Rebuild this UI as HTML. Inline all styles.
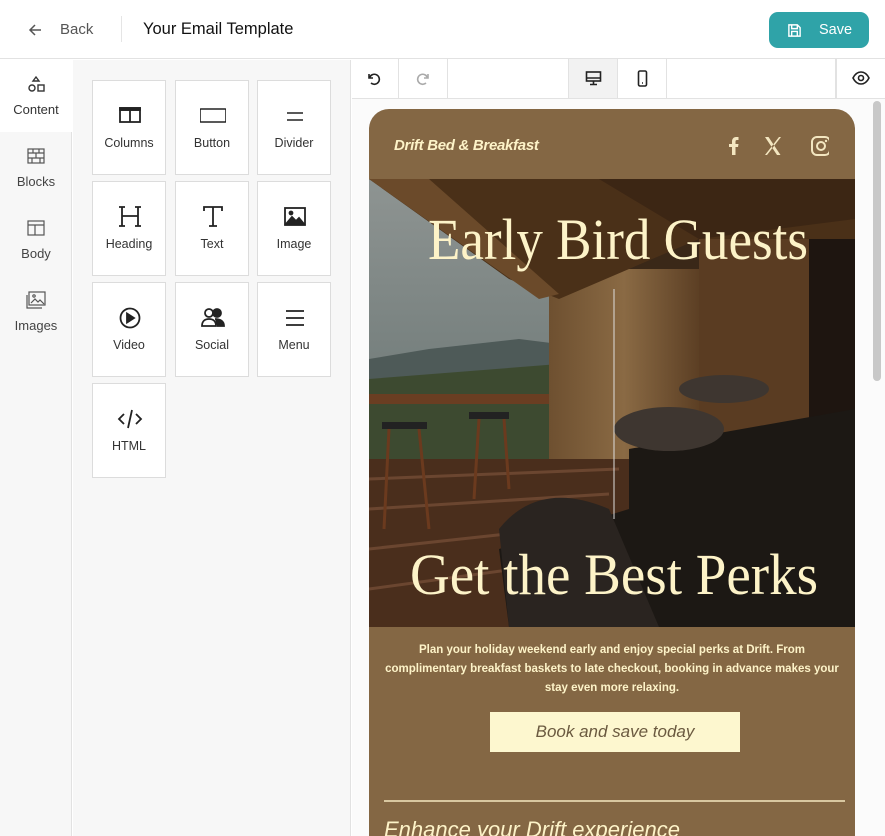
<!DOCTYPE html>
<html><head><meta charset="utf-8"><style>
*{box-sizing:border-box;margin:0;padding:0}
body{width:885px;height:836px;overflow:hidden;background:#fff;font-family:"Liberation Sans",sans-serif;position:relative;color:#222}
.top{position:absolute;left:0;top:0;width:885px;height:59px;border-bottom:1px solid #e2e2e2;background:#fff}
.rail{position:absolute;left:0;top:60px;width:72px;height:776px;background:#f7f7f7;border-right:1px solid #e2e2e2}
.ri{position:absolute;left:0;width:72px;text-align:center;font-size:13px;color:#333}
.panel{position:absolute;left:73px;top:60px;width:278px;height:776px;background:#f7f7f7;border-right:1px solid #e2e2e2}
.tile{position:absolute;width:74px;height:95px;background:#fff;border:1px solid #dcdcdc;text-align:center;font-size:12.5px;color:#333}
.tile svg{position:absolute;left:24px;top:22px}
.tile span{position:absolute;left:0;right:0;top:55px}
.tb{position:absolute;left:352px;top:59px;width:533px;height:40px;border-bottom:1px solid #e2e2e2;background:#fff}
.tb div{position:absolute;top:0;height:39px;border-right:1px solid #e2e2e2}
</style></head><body>
<div class="top">
<svg style="position:absolute;left:28px;top:23px" width="14" height="14" viewBox="0 0 14 14" fill="none" stroke="#555" stroke-width="1.5"><path d="M13 7H2M7 2L2 7l5 5"/></svg>
<div style="position:absolute;left:60px;top:21px;font-size:15px;color:#555">Back</div>
<div style="position:absolute;left:121px;top:16px;width:1px;height:26px;background:#e5e5e5"></div>
<div style="position:absolute;left:143px;top:20px;font-size:16.5px;color:#111">Your Email Template</div>
<div style="position:absolute;left:769px;top:12px;width:100px;height:36px;border-radius:9px;background:#2fa3a8;color:#fff;font-size:14.5px">
<svg style="position:absolute;left:18px;top:11px" width="15" height="15" viewBox="0 0 16 16" fill="none" stroke="#fff" stroke-width="1.5"><path d="M2 2h9l3 3v9H2z M5 2v4h6V2 M5 14v-5h6v5"/></svg>
<span style="position:absolute;left:50px;top:10px">Save</span></div>
</div>
<div class="rail">
<div style="position:absolute;left:0;top:0;width:72px;height:72px;background:#fff"></div>
<div style="position:absolute;left:72px;top:27px;width:0;height:0;border-top:8px solid transparent;border-bottom:8px solid transparent;border-left:8px solid #fff"></div>
<svg style="position:absolute;left:27px;top:15px" width="18" height="18" viewBox="0 0 18 18" fill="none" stroke="#333" stroke-width="1.4"><path d="M9 2l3 4H6z"/><circle cx="5" cy="13" r="3"/><rect x="11" y="10" width="6" height="6"/></svg>
<div class="ri" style="top:42px">Content</div>
<svg style="position:absolute;left:27px;top:88px" width="18" height="16" viewBox="0 0 18 16" fill="none" stroke="#555" stroke-width="1.2"><rect x="1" y="1" width="16" height="14"/><path d="M1 5h16M1 10h16M6 1v4M12 1v4M9 5v5M5 10v5M13 10v5"/></svg>
<div class="ri" style="top:114px;color:#444">Blocks</div>
<svg style="position:absolute;left:27px;top:160px" width="18" height="16" viewBox="0 0 18 16" fill="none" stroke="#555" stroke-width="1.2"><rect x="1" y="1" width="16" height="14"/><path d="M1 5h16M8 5v10"/></svg>
<div class="ri" style="top:186px;color:#444">Body</div>
<svg style="position:absolute;left:26px;top:231px" width="20" height="18" viewBox="0 0 20 18" fill="none" stroke="#555" stroke-width="1.2"><rect x="3" y="1" width="16" height="13"/><path d="M1 4v13h15M5 12l4-4 3 3 2-2 4 4"/><circle cx="8" cy="5" r="1.2"/></svg>
<div class="ri" style="top:258px;color:#444">Images</div>
</div>
<div class="panel">
<div class="tile" style="left:19px;top:20px"><svg width="26" height="22" viewBox="0 0 26 22" fill="none" stroke="#222" stroke-width="1.8"><rect x="3" y="5" width="20" height="14"/><path d="M3 7h20M13 7v12" /><path d="M3 5h20v2H3z" fill="#222"/></svg><span>Columns</span></div>
<div class="tile" style="left:102px;top:20px"><svg width="26" height="22" viewBox="0 0 26 22" fill="none" stroke="#222" stroke-width="1.6"><rect x="0" y="6" width="26" height="13" rx="1"/></svg><span>Button</span></div>
<div class="tile" style="left:184px;top:20px"><svg width="26" height="22" viewBox="0 0 26 22" fill="none" stroke="#222" stroke-width="1.6"><path d="M5 10h16M5 17h16"/></svg><span>Divider</span></div>
<div class="tile" style="left:19px;top:121px"><svg width="26" height="24" viewBox="0 0 26 24" fill="none" stroke="#222" stroke-width="1.8"><path d="M5 3v19M21 3v19M5 12h16M2 3h6M18 3h6M2 22h6M18 22h6"/></svg><span>Heading</span></div>
<div class="tile" style="left:102px;top:121px"><svg width="26" height="24" viewBox="0 0 26 24" fill="none" stroke="#222" stroke-width="1.8"><path d="M4 7V3h18v4M13 3v19M9 22h8"/></svg><span>Text</span></div>
<div class="tile" style="left:184px;top:121px"><svg width="26" height="24" viewBox="0 0 26 24" fill="none" stroke="#222" stroke-width="1.8"><rect x="3" y="4" width="20" height="17"/><path d="M4 20l6-7 4 4 3-3 5 6z" fill="#222"/><circle cx="9" cy="9" r="1.5" fill="#222"/></svg><span>Image</span></div>
<div class="tile" style="left:19px;top:222px"><svg width="26" height="24" viewBox="0 0 26 24" fill="none" stroke="#222" stroke-width="1.8"><circle cx="13" cy="13" r="9.5"/><path d="M10 8.5l7 4.5-7 4.5z" fill="#222"/></svg><span>Video</span></div>
<div class="tile" style="left:102px;top:222px"><svg width="26" height="24" viewBox="0 0 26 24" fill="none" stroke="#222" stroke-width="1.8"><circle cx="9" cy="8" r="4"/><path d="M2 21c0-5 3-7 7-7s7 2 7 7z"/><circle cx="17" cy="8" r="4" fill="#222"/><path d="M15 14c5 0 9 2 9 7h-7" fill="#222"/></svg><span>Social</span></div>
<div class="tile" style="left:184px;top:222px"><svg width="26" height="24" viewBox="0 0 26 24" fill="none" stroke="#222" stroke-width="1.8"><path d="M4 6h18M4 13h18M4 20h18"/></svg><span>Menu</span></div>
<div class="tile" style="left:19px;top:323px"><svg width="26" height="24" viewBox="0 0 26 24" fill="none" stroke="#222" stroke-width="1.8"><path d="M7 8l-5 5 5 5M19 8l5 5-5 5M15 4l-4 18"/></svg><span>HTML</span></div>
</div>
<div class="tb">
<div style="left:0;width:47px"><svg style="position:absolute;left:15px;top:13px" width="14" height="14" viewBox="0 0 14 14" fill="none" stroke="#222" stroke-width="1.6"><path d="M2 2v4h4"/><path d="M2.5 6A5 5 0 1 1 4 11"/></svg></div>
<div style="left:47px;width:49px"><svg style="position:absolute;left:17px;top:13px" width="14" height="14" viewBox="0 0 14 14" fill="none" stroke="#aaa" stroke-width="1.6"><path d="M12 2v4H8"/><path d="M11.5 6A5 5 0 1 0 10 11"/></svg></div>
<div style="left:96px;width:121px"></div>
<div style="left:217px;width:49px;background:#f2f2f2"><svg style="position:absolute;left:16px;top:12px" width="17" height="15" viewBox="0 0 17 15" fill="none" stroke="#222" stroke-width="1.6"><rect x="1.5" y="1" width="14" height="9"/><path d="M1.5 7h14M8.5 10v3M5 13.5h7"/></svg></div>
<div style="left:266px;width:49px"><svg style="position:absolute;left:19px;top:11px" width="11" height="17" viewBox="0 0 11 17" fill="none" stroke="#222" stroke-width="1.6"><rect x="1.5" y="1" width="8" height="15" rx="1.5"/><path d="M5 13h1"/></svg></div>
<div style="left:315px;width:169px"></div>
<div style="left:484px;width:49px;border-right:none;border-left:1px solid #e2e2e2"><svg style="position:absolute;left:15px;top:12px" width="18" height="14" viewBox="0 0 18 14" fill="none" stroke="#222" stroke-width="1.6"><path d="M1 7c2-4 5-6 8-6s6 2 8 6c-2 4-5 6-8 6S3 11 1 7z"/><circle cx="9" cy="7" r="2.5"/></svg></div>
</div>
<div style="position:absolute;left:352px;top:99px;width:533px;height:737px;background:#fbfbfb"></div>
<div style="position:absolute;left:873px;top:101px;width:8px;height:280px;border-radius:4px;background:#c8c8c8"></div>
<div style="position:absolute;left:369px;top:109px;width:486px;height:727px;background:#846744;border-radius:20px 20px 0 0;overflow:hidden">
<div style="position:absolute;left:25px;top:28px;font-size:15px;font-weight:bold;font-style:italic;color:#fdf3c8;letter-spacing:-0.3px">Drift Bed &amp; Breakfast</div>
<svg style="position:absolute;left:350px;top:25px" width="110" height="24" viewBox="0 0 110 24" fill="#f3e6c0"><path d="M13 21v-8h-3v-3h3V7.5C13 5 14.5 3 17 3h2.5v3H18c-1 0-1.5.5-1.5 1.5V10h3l-.5 3h-2.5v8z"/><path d="M46 3h3.5l12 18h-3.5zM60 3l-14 18h2l14-18z" /><rect x="53" y="3" width="18" height="18" rx="5" fill="none" stroke="#f3e6c0" stroke-width="2" transform="translate(40 0)"/><circle cx="102" cy="12" r="4" fill="none" stroke="#f3e6c0" stroke-width="2"/><circle cx="107" cy="7" r="1.2"/></svg>
<svg style="position:absolute;left:0;top:70px" width="486" height="448" viewBox="0 0 486 448">
<defs><linearGradient id="sky" x1="0" y1="0" x2="0" y2="1"><stop offset="0" stop-color="#8e9492"/><stop offset="1" stop-color="#6d7876"/></linearGradient>
<linearGradient id="wall" x1="0" y1="0" x2="1" y2="0"><stop offset="0" stop-color="#6e5030"/><stop offset=".5" stop-color="#8a6a44"/><stop offset="1" stop-color="#5c3f24"/></linearGradient></defs>
<rect width="486" height="448" fill="#3a2818"/>
<rect x="0" y="0" width="190" height="260" fill="url(#sky)"/>
<path d="M0 180 L60 170 L150 160 L190 165 L190 230 L0 230z" fill="#4e5a58"/>
<path d="M0 200 L190 185 L190 280 L0 280z" fill="#3d4a30"/>
<rect x="0" y="215" width="180" height="10" fill="#6a3e22"/>
<path d="M0 280 L260 280 L260 448 L0 448z" fill="#4a2e1c"/>
<path d="M0 300 L250 290 M0 330 L240 315 M0 370 L230 345 M0 410 L220 380" stroke="#6b4630" stroke-width="3"/>
<rect x="180" y="90" width="150" height="190" fill="url(#wall)"/>
<rect x="330" y="60" width="156" height="250" fill="#5a3c22"/>
<rect x="440" y="60" width="46" height="250" fill="#1e1510"/>
<path d="M0 0 L486 0 L486 60 L330 60 L190 120 L140 100 L0 0z" fill="#4a3018"/>
<path d="M0 0 L60 0 L190 115 L170 120z" fill="#6b4a2a"/>
<path d="M230 0 L330 60 L486 40 L486 0z" fill="#3c2614"/>
<path d="M260 270 L486 230 L486 448 L140 448 L130 370 L260 330z" fill="#1c1814"/>
<path d="M140 448 L130 350 Q170 300 240 330 L290 448z" fill="#2a2420"/>
<ellipse cx="300" cy="250" rx="55" ry="22" fill="#3e3630"/>
<ellipse cx="355" cy="210" rx="45" ry="14" fill="#3e3630"/>
<path d="M20 250 L15 350 M50 250 L60 350 M110 240 L105 320 M135 240 L140 310" stroke="#6b3a1e" stroke-width="3"/>
<rect x="13" y="243" width="45" height="7" fill="#222"/><rect x="100" y="233" width="40" height="7" fill="#222"/>
<line x1="245" y1="110" x2="245" y2="340" stroke="#ddd" stroke-width="1"/>
<text x="59" y="80" textLength="380" lengthAdjust="spacingAndGlyphs" font-family="Liberation Serif,serif" font-size="58" fill="#fdf3c8">Early Bird Guests</text>
<text x="41" y="415" textLength="408" lengthAdjust="spacingAndGlyphs" font-family="Liberation Serif,serif" font-size="58" fill="#fdf3c8">Get the Best Perks</text>
</svg>
<div style="position:absolute;left:15px;width:456px;top:532px;text-align:center;font-size:11.5px;line-height:19px;font-weight:bold;color:#fdf3c8">Plan your holiday weekend early and enjoy special perks at Drift. From complimentary breakfast baskets to late checkout, booking in advance makes your stay even more relaxing.</div>
<div style="position:absolute;left:121px;top:603px;width:250px;height:40px;background:#fdf7cf;text-align:center;line-height:40px;font-size:17px;font-style:italic;color:#6b5a40">Book and save today</div>
<div style="position:absolute;left:15px;top:691px;width:461px;height:2px;background:#d8c7a0"></div>
<div style="position:absolute;left:15px;top:708px;font-size:22px;font-style:italic;color:#fdf3c8">Enhance your Drift experience</div>
</div>
</body></html>
